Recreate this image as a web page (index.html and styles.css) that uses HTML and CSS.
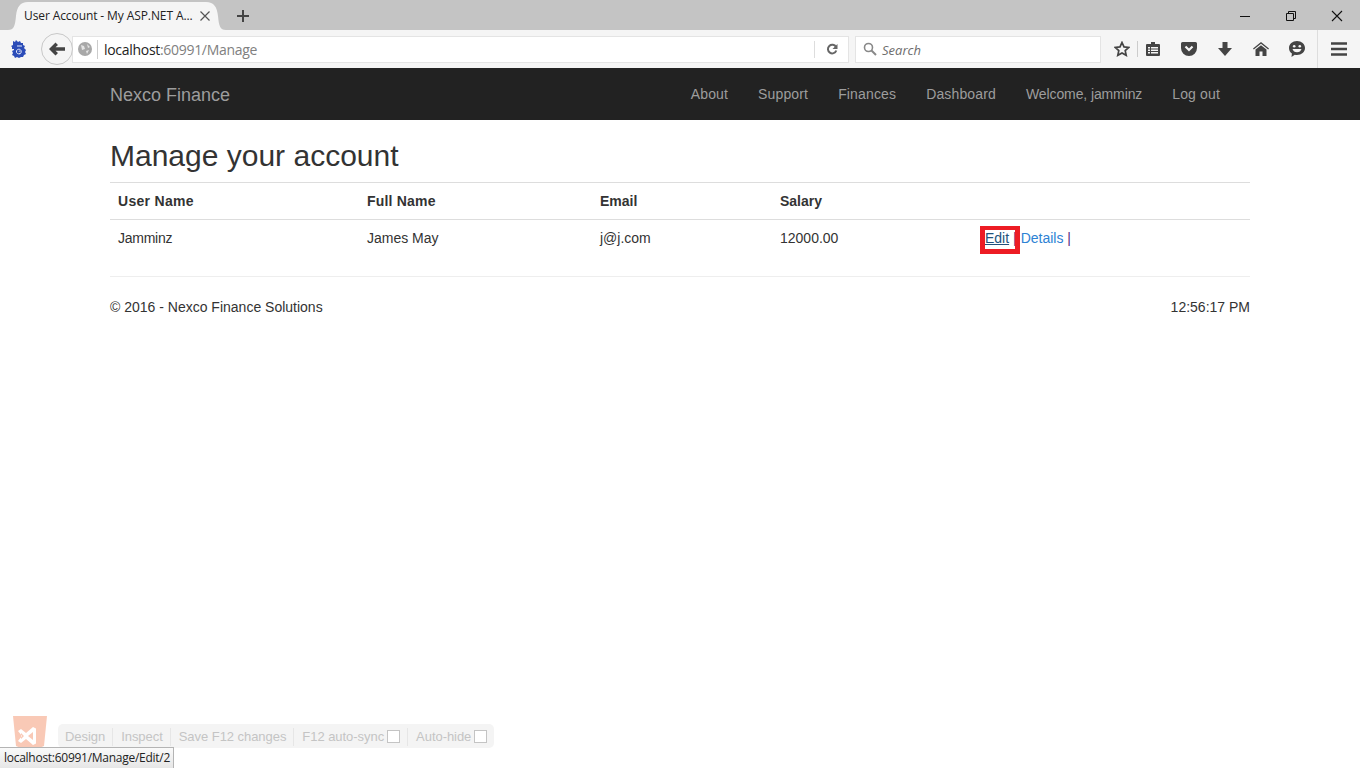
FILE: index.html
```html
<!DOCTYPE html>
<html lang="en">

<head>
  <meta charset="UTF-8">
  <title>User Account - My ASP.NET Application</title>
  <link rel="stylesheet" href="styles.css">
</head>

<body>
  <div class="tabstrip">
    <div class="tab">
      <span class="tab-title">User Account - My ASP.NET A...</span>
      <svg class="tab-close" width="12" height="12" viewBox="0 0 12 12"><path d="M1.5 1.500l9 9M10.500 1.500l-9 9" stroke="#555" stroke-width="1.2" fill="none"/></svg>
    </div>
    <svg class="tab-new" width="14" height="14" viewBox="0 0 14 14"><path d="M7 1v12M1 7h12" stroke="#444" stroke-width="2" fill="none"/></svg>
    <div class="window-btns">
      <svg width="12" height="12" viewBox="0 0 12 12"><path d="M1 6.5h10" stroke="#111" fill="none"/></svg>
      <svg width="12" height="12" viewBox="0 0 12 12"><path d="M1.5 3.5h7v7h-7zM3.5 3.5v-2h7v7h-2" stroke="#111" fill="none"/></svg>
      <svg width="12" height="12" viewBox="0 0 12 12"><path d="M1 1l10 10M11 1L1 11" stroke="#111" stroke-width="1.1" fill="none"/></svg>
    </div>
  </div>

  <div class="toolbar">
    <svg class="seahorse" width="16" height="18" viewBox="0 0 16 18">
      <path d="M3 1l2 1 1-2 2 2 2-1 1 2 2 0 0 2 2 1-1 2 2 2-1 2 1 2-2 1-1 2-2 0-2 1-2-1-2 1-1-2-2-1 1-2-1-2 2-1 0-1-2 0 0-2-1-1 2-1z" fill="#2b4cb8"/>
      <path d="M10 13.500c-2 1-4-.5-3.500-2.500.5-2 3.500-2.500 4.500-.5.800 1.800-.5 3.500-1.500 3.500M9 11.500c0-.8 1-.8 1 0" stroke="#e8ecfa" stroke-width="1" fill="none"/>
      <path d="M7 6h5" stroke="#e8ecfa" stroke-width="1" fill="none"/>
    </svg>
    <div class="back-btn">
      <svg width="16" height="14" viewBox="0 0 16 14"><path d="M0 7L6.500.5 9 3 6.500 5.300H16v3.400H6.500L9 11l-2.500 2.500z" fill="#444"/></svg>
    </div>
    <div class="urlbar">
      <svg class="globe" width="14" height="14" viewBox="0 0 14 14"><circle cx="7" cy="7" r="7" fill="#a8a8a8"/><path d="M3 3l3 1 1 3-3 1zM9 2l3 3-2 1zM8 9l3-1-2 4z" fill="#e4e4e4"/></svg>
      <span class="url-text">localhost<span class="url-dim">:60991/Manage</span></span>
      <div class="url-reload">
        <svg width="12" height="12" viewBox="0 0 12 12"><path d="M10 4a4.300 4.300 0 1 0 .3 3.500" stroke="#666" stroke-width="2" fill="none"/><path d="M11.500 1v5h-5z" fill="#666"/></svg>
      </div>
    </div>
    <div class="searchbar">
      <svg width="14" height="14" viewBox="0 0 14 14"><circle cx="5.500" cy="5.500" r="4" stroke="#888" stroke-width="1.600" fill="none"/><path d="M8.500 8.500l4.500 4.500" stroke="#888" stroke-width="2" fill="none"/></svg>
      <span>Search</span>
    </div>
    <div class="tool-icons">
      <div class="slot slot-star">
        <svg width="16" height="16" viewBox="0 0 16 16"><path d="M8 1.500l2 4.400 4.800.5-3.600 3.200 1 4.700L8 11.900l-4.200 2.400 1-4.700L1.200 6.400 6 5.900z" stroke="#444" stroke-width="1.700" fill="none"/></svg>
      </div>
      <div class="slot slot-reader">
        <svg width="14" height="16" viewBox="0 0 14 16"><path d="M1 3h12a1 1 0 0 1 1 1v10a1 1 0 0 1-1 1H1a1 1 0 0 1-1-1V4a1 1 0 0 1 1-1zM5 1h4v2H5z" fill="#444"/><path d="M2 6h2v1.500H2zM5 6h7v1.500H5zM2 8.500h2V10H2zM5 8.500h7V10H5zM2 11h2v1.500H2zM5 11h7v1.500H5z" fill="#f5f5f5"/></svg>
      </div>
      <div class="slot">
        <svg width="16" height="14" viewBox="0 0 16 14"><path d="M1.500 0h13A1.500 1.500 0 0 1 16 1.500V6a8 8 0 0 1-16 0V1.500A1.500 1.500 0 0 1 1.500 0z" fill="#444"/><path d="M4.500 4.500L8 8l3.500-3.500" stroke="#f5f5f5" stroke-width="2.200" fill="none"/></svg>
      </div>
      <div class="slot">
        <svg width="14" height="14" viewBox="0 0 14 14"><path d="M4.500 0h5v6H14l-7 8-7-8h4.500z" fill="#444"/></svg>
      </div>
      <div class="slot">
        <svg width="16" height="14" viewBox="0 0 16 14"><path d="M8 0l8 6.500-.8 1L8 1.800.8 7.500 0 6.500z" fill="#444"/><path d="M8 3.200l5.500 4.400V14H9.500V9.500h-3V14h-4V7.600z" fill="#444"/></svg>
      </div>
      <div class="slot">
        <svg width="16" height="16" viewBox="0 0 16 16"><path d="M8 0c4.500 0 8 3 8 7s-3.500 7-8 7c-.8 0-1.500-.1-2.200-.3L2.500 16l.4-3.500C1.100 11.300 0 9.300 0 7c0-4 3.500-7 8-7z" fill="#444"/><circle cx="5.200" cy="5.200" r="1.300" fill="#f5f5f5"/><circle cx="10.800" cy="5.200" r="1.300" fill="#f5f5f5"/><path d="M3.500 8h9c-.5 2-2.300 3.300-4.500 3.300S4 10 3.500 8z" fill="#f5f5f5"/></svg>
      </div>
      <div class="slot slot-menu">
        <svg width="16" height="14" viewBox="0 0 16 14"><path d="M0 1.500h16M0 7h16M0 12.500h16" stroke="#444" stroke-width="2.600" fill="none"/></svg>
      </div>
    </div>
  </div>

  <nav class="navbar">
    <div class="container navbar-inner">
      <a class="brand">Nexco Finance</a>
      <ul class="nav">
        <li>About</li>
        <li>Support</li>
        <li>Finances</li>
        <li>Dashboard</li>
        <li class="welcome">Welcome, jamminz</li>
        <li>Log out</li>
      </ul>
    </div>
  </nav>

  <div class="container">
    <h2>Manage your account</h2>
    <table>
      <thead>
        <tr>
          <th class="col-user">User Name</th>
          <th class="col-name">Full Name</th>
          <th class="col-email">Email</th>
          <th class="col-salary">Salary</th>
          <th></th>
        </tr>
      </thead>
      <tbody>
        <tr>
          <td class="cell-user">Jamminz</td>
          <td>James May</td>
          <td>j@j.com</td>
          <td>12000.00</td>
          <td class="actions"><span class="marked"><a class="link-hover" href="#">Edit</a><span class="mark"></span></span> <span class="pipe pipe-first">|</span><a href="#">Details</a> <span class="pipe">|</span></td>
        </tr>
      </tbody>
    </table>
    <hr>
    <footer>
      <p>© 2016 - Nexco Finance Solutions</p>
      <p>12:56:17 PM</p>
    </footer>
  </div>

  <div class="vs-logo">
    <svg width="36" height="36" viewBox="0 0 36 36"><path d="M1 0h34l-3 30-14 6-14-6z" fill="#f9c9b6"/><path fill-rule="evenodd" d="M6 15l3-2 5 4 7-6 3 1.500v15L21 29l-7-6-5 4-3-2 4-5zM9 17v6l3-3zM21 16l-5 4 5 4z" fill="#fff"/></svg>
  </div>
  <div class="browser-link">
    <span>Design</span>
    <span>Inspect</span>
    <span>Save F12 changes</span>
    <span>F12 auto-sync<i class="check"></i></span>
    <span>Auto-hide<i class="check"></i></span>
  </div>
  <div class="status">localhost:60991/Manage/Edit/2</div>
</body>

</html>
```

FILE: styles.css
```css
* {
  box-sizing: border-box;
}
html, body {
  height: 100%;
}
body {
  margin: 0;
  position: relative;
  overflow: hidden;
  background: #fff;
  color: #333;
  font: 14px/20px "Liberation Sans", Arial, sans-serif;
}

/* browser chrome */
.tabstrip {
  display: flex;
  align-items: flex-end;
  height: 30px;
  background: #c4c4c4;
}
.tab {
  display: flex;
  align-items: center;
  justify-content: space-between;
  width: 218px;
  height: 28px;
  margin-left: 8px;
  padding: 0 15px 1px 16px;
  background: #f5f5f5;
  clip-path: path("M0 28C6 28 7 24 8 14C9 5 12 0 20 0H198C206 0 209 5 210 14C211 24 212 28 218 28Z");
  color: #222;
  font: 12px "Open Sans", sans-serif;
  letter-spacing: -.1px;
  white-space: nowrap;
}
.tab-new {
  margin: 0 0 7px 10px;
}
.window-btns {
  display: flex;
  gap: 34px;
  margin: 0 17px 8px auto;
  align-self: flex-end;
}
.toolbar {
  display: flex;
  align-items: center;
  height: 39px;
  padding-left: 10px;
  background: #f5f5f5;
  border-bottom: 1px solid #222;
}
.seahorse {
  flex: none;
}
.back-btn {
  display: flex;
  align-items: center;
  justify-content: center;
  width: 32px;
  height: 32px;
  margin-left: 15px;
  background: #f5f5f5;
  border: 1px solid #c8c8c8;
  border-radius: 50%;
  position: relative;
  z-index: 1;
}
.urlbar {
  display: flex;
  align-items: center;
  width: 777px;
  height: 27px;
  margin-left: -1px;
  padding-left: 5px;
  background: #fff;
  border: 1px solid #e4e4e4;
  font: 14px "Open Sans", sans-serif;
  color: #222;
}
.url-text {
  margin-left: 5px;
  padding: 1px 0 0 6px;
  border-left: 1px solid #ccc;
  line-height: 18px;
  letter-spacing: -.3px;
}
.url-dim {
  color: #808080;
}
.url-reload {
  display: flex;
  align-items: center;
  justify-content: center;
  width: 34px;
  height: 17px;
  margin-left: auto;
  border-left: 1px solid #ddd;
}
.searchbar {
  display: flex;
  align-items: center;
  gap: 5px;
  width: 246px;
  height: 27px;
  margin-left: 6px;
  padding-left: 7px;
  background: #fff;
  border: 1px solid #e4e4e4;
  font: italic 13px "Open Sans", sans-serif;
  color: #6d6d6d;
}
.searchbar span {
  padding-top: 1px;
}
.tool-icons {
  display: flex;
  align-items: center;
  flex: 1;
  height: 100%;
  padding-left: 5px;
}
.slot {
  display: flex;
  align-items: center;
  justify-content: center;
  flex: none;
  width: 36px;
}
.slot-star {
  width: 32px;
  height: 16px;
  border-right: 1px solid #ccc;
}
.slot-reader {
  width: 30px;
  margin-right: 3px;
}
.slot-menu {
  width: 43px;
  height: 100%;
  margin-left: 2px;
  border-left: 1px solid #ddd;
}

/* site navbar */
.container {
  width: 1140px;
  margin: 0 auto;
}
.navbar {
  height: 51px;
  background: #222;
}
.navbar-inner {
  display: flex;
  align-items: center;
  justify-content: space-between;
  height: 50px;
  color: #9d9d9d;
}
.brand {
  padding-top: 2px;
  color: #9d9d9d;
  font-size: 18px;
}
.nav {
  display: flex;
  gap: 30px;
  margin: 0;
  padding: 0 30px 0 0;
  list-style: none;
  letter-spacing: .15px;
}
.nav .welcome {
  letter-spacing: -.11px;
}

/* page */
h2 {
  margin: 19px 0 10px;
  font-size: 30px;
  font-weight: 500;
  line-height: 33px;
}
table {
  width: 100%;
  border-collapse: collapse;
  table-layout: fixed;
}
th, td {
  padding: 8px;
  text-align: left;
  line-height: 20px;
  border-top: 1px solid #ddd;
}
.col-user {
  width: 249px;
  letter-spacing: .3px;
}
.col-name {
  width: 233px;
  letter-spacing: .2px;
}
.col-email {
  width: 180px;
}
.col-salary {
  width: 205px;
}
.cell-user {
  letter-spacing: -.25px;
}
a {
  color: #2d82d4;
  text-decoration: none;
}
.link-hover {
  color: #23527c;
  text-decoration: underline;
}
.pipe {
  color: #5a2d82;
}
.pipe-first {
  margin-right: 4px;
}
.marked {
  position: relative;
}
.mark {
  position: absolute;
  left: -5px;
  top: -4px;
  width: 40px;
  height: 28px;
  border: 5px solid #ed1c24;
  border-top-width: 4px;
}
hr {
  margin: 20px 0;
  border: 0;
  border-top: 1px solid #eee;
}
footer {
  display: flex;
  justify-content: space-between;
}
footer p {
  margin: 0;
}

/* overlays at the bottom */
.vs-logo {
  position: absolute;
  left: 12px;
  top: 716px;
}
.browser-link {
  position: absolute;
  left: 58px;
  top: 724px;
  display: flex;
  align-items: center;
  height: 24px;
  padding: 1px 7px 0;
  background: #f4f4f4;
  border-radius: 5px;
  color: #c4c4c4;
  font-size: 13px;
  letter-spacing: -.05px;
}
.browser-link span {
  display: flex;
  align-items: center;
  height: 18px;
  padding: 0 7px 0 8px;
  border-left: 1px solid #e6e6e6;
}
.browser-link span:first-child {
  padding-left: 0;
  border-left: 0;
}
.browser-link span:last-child {
  padding-right: 0;
}
.check {
  width: 13px;
  height: 13px;
  margin-left: 3px;
  background: #fff;
  border: 1px solid #c4c4c4;
}
.status {
  position: absolute;
  left: 0;
  bottom: 0;
  height: 21px;
  padding: 1px 3px 0 4px;
  background: linear-gradient(#fafafa, #e6e6e6);
  border: 1px solid #b4b4b4;
  border-width: 1px 1px 0 0;
  color: #222;
  font: 12px/18px "Open Sans", sans-serif;
  letter-spacing: -.27px;
}
```
